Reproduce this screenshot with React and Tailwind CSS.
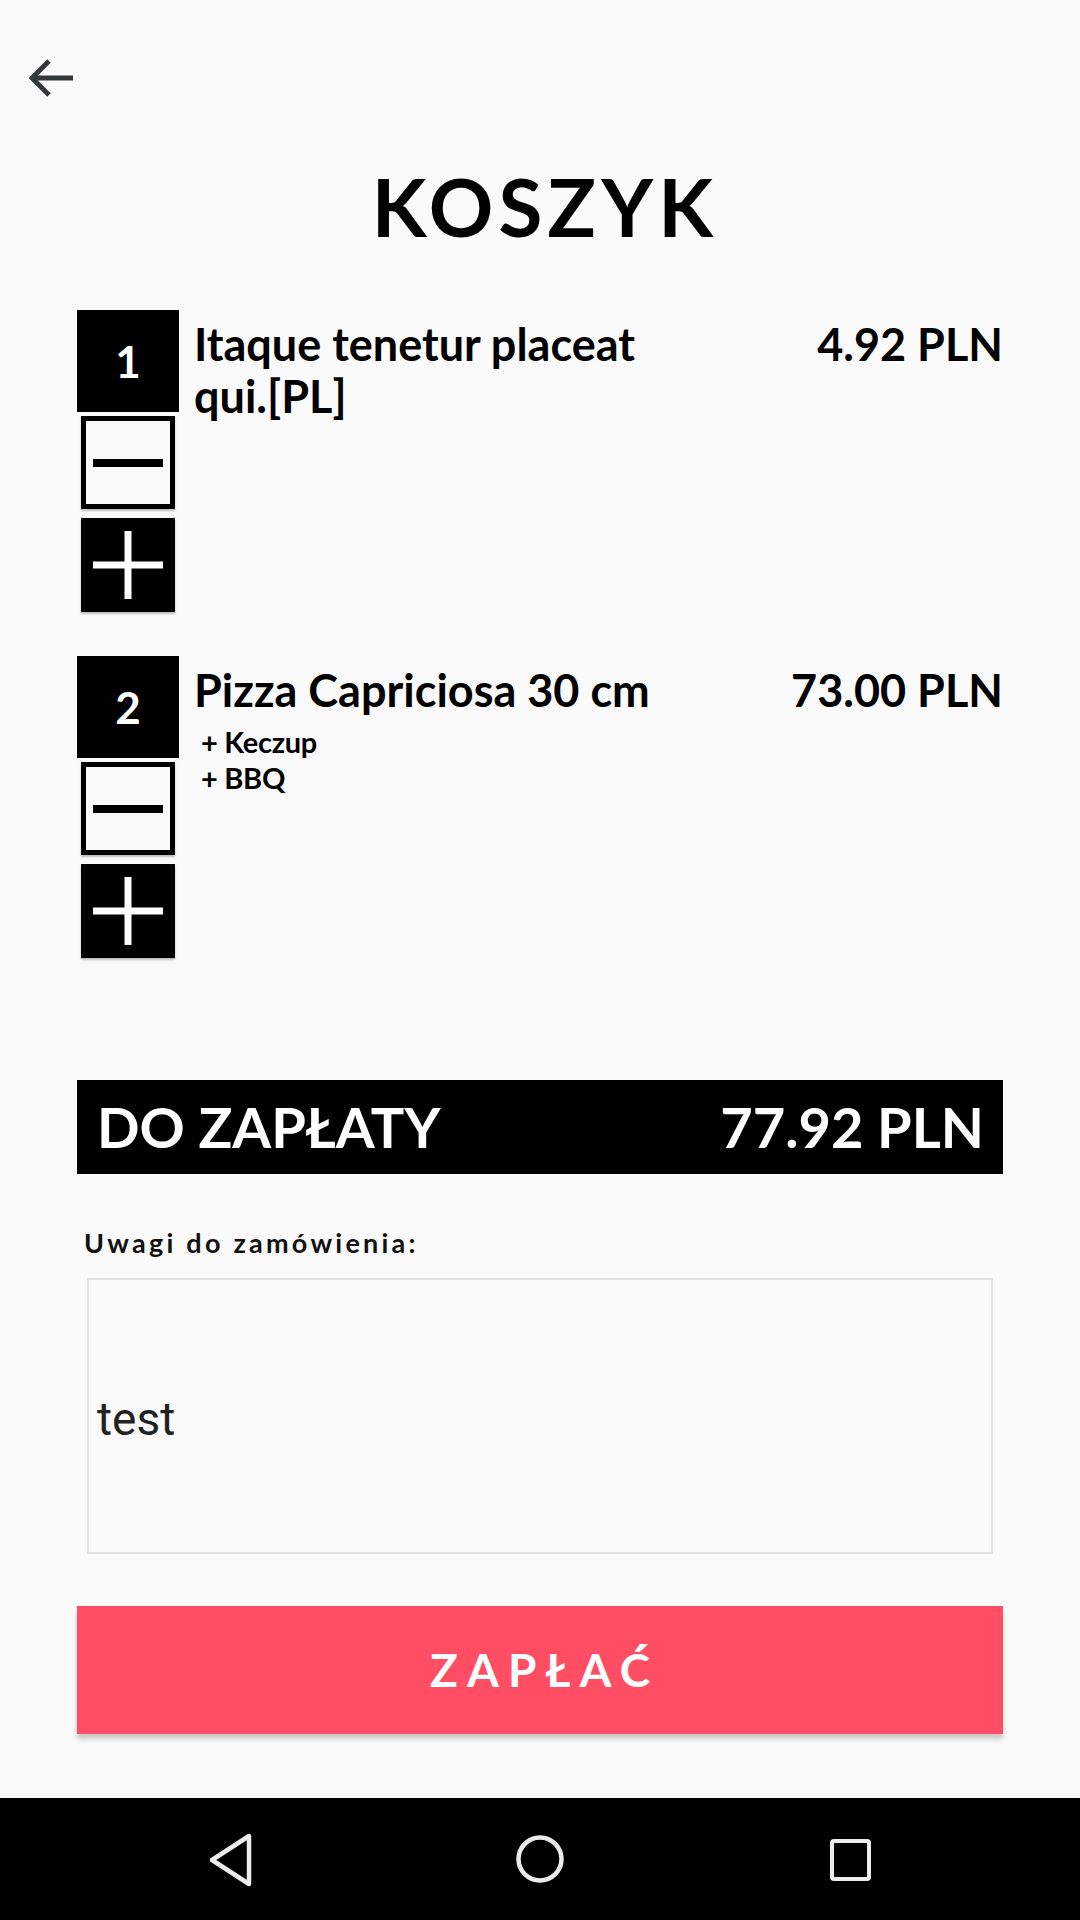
const items = [
  { id: 1, qty: 1, name: 'Itaque tenetur placeat qui.[PL]', price: '4.92 PLN', extras: [] },
  { id: 2, qty: 2, name: 'Pizza Capriciosa 30 cm', price: '73.00 PLN', extras: ['Keczup', 'BBQ'] },
];

function QtyColumn({ qty }) {
  return (
    <div className="flex w-[102px] shrink-0 flex-col items-center">
      <div className="flex h-[102px] w-[102px] items-center justify-center bg-black text-[44px] font-bold leading-none text-white">
        {qty}
      </div>
      <button className="mt-[4px] flex h-[93px] w-[94px] items-center justify-center border-[5px] border-black bg-[#fafafa] shadow-[0_2px_2px_rgba(0,0,0,0.25)]">
        <span className="block h-[8px] w-[70px] bg-black" />
      </button>
      <button className="mt-[9px] h-[94px] w-[94px] bg-black shadow-[0_2px_2px_rgba(0,0,0,0.25)]">
        <svg width="94" height="94" viewBox="0 0 94 94">
          <rect x="12" y="43.5" width="70" height="7" fill="#fff" />
          <rect x="43.5" y="13" width="7" height="68" fill="#fff" />
        </svg>
      </button>
    </div>
  );
}

function CartItem({ item }) {
  return (
    <div className="flex">
      <QtyColumn qty={item.qty} />
      <div className="ml-[15px] flex flex-1 items-start pt-[8px]">
        <div className="w-[480px]">
          <p className="text-[45px] font-bold leading-[52px] text-black">{item.name}</p>
          {item.extras.length > 0 && (
            <div className="mt-[8px] pl-[7px]">
              {item.extras.map((extra) => (
                <p key={extra} className="text-[29px] font-bold leading-[36px] tracking-[-0.01em] text-black">+ {extra}</p>
              ))}
            </div>
          )}
        </div>
        <p className="ml-auto text-[45px] font-bold leading-[52px] text-black">{item.price}</p>
      </div>
    </div>
  );
}

export default function App() {
  return (
    <div className="flex h-[1920px] w-[1080px] flex-col bg-[#fafafa] font-[Lato,sans-serif]">
      <div className="h-[166px] pl-[28px] pt-[58px]">
        <svg width="46" height="40" viewBox="0 0 46 40" fill="none" stroke="#33383b" strokeWidth="4.8">
          <path d="M45 20H5" />
          <path d="M21 3L4 20l17 17" />
        </svg>
      </div>

      <h1 className="pl-[10px] text-center text-[80px] font-bold leading-none tracking-[0.065em] text-black">KOSZYK</h1>

      <div className="mt-[64px] flex flex-col gap-[44px] px-[77px]">
        {items.map((item) => (
          <CartItem key={item.id} item={item} />
        ))}
      </div>

      <div className="mx-[77px] mt-[122px] flex h-[94px] items-center justify-between bg-black pl-[20px] pr-[19px] text-[56px] font-bold leading-none text-white">
        <span>DO ZAPŁATY</span>
        <span>77.92 PLN</span>
      </div>

      <p className="mt-[55px] pl-[84px] text-[27px] font-bold leading-none tracking-[0.12em] text-[#111]">Uwagi do zamówienia:</p>

      <div className="mx-[87px] mt-[22px] flex h-[276px] items-center border-2 border-[#e2e0e2] pl-[8px] pt-[7px]">
        <span className="font-[Roboto,sans-serif] text-[46px] text-[#222]">test</span>
      </div>

      <button className="mx-[77px] mt-[52px] flex h-[128px] items-center justify-center bg-[#ff4e63] text-[46px] font-bold leading-none tracking-[0.2em] text-white shadow-[0_5px_5px_rgba(0,0,0,0.2)]">
        <span className="pl-[0.2em]">ZAPŁAĆ</span>
      </button>

      <div className="flex-1" />

      <div className="flex h-[122px] items-center justify-center gap-[250px] bg-black">
        <div className="flex w-[60px] justify-center">
          <svg width="60" height="60" viewBox="0 0 60 60" fill="none" stroke="#ececec" strokeWidth="4.5" strokeLinejoin="round">
            <path d="M12 31L49 7V55Z" />
          </svg>
        </div>
        <div className="flex w-[60px] justify-center">
          <svg width="60" height="60" viewBox="0 0 60 60" fill="none" stroke="#ececec" strokeWidth="4.5">
            <circle cx="30" cy="30" r="21.5" />
          </svg>
        </div>
        <div className="flex w-[60px] justify-center">
          <svg width="60" height="60" viewBox="0 0 60 60" fill="none" stroke="#ececec" strokeWidth="4">
            <rect x="12" y="12" width="37" height="38" rx="2" />
          </svg>
        </div>
      </div>
    </div>
  );
}
